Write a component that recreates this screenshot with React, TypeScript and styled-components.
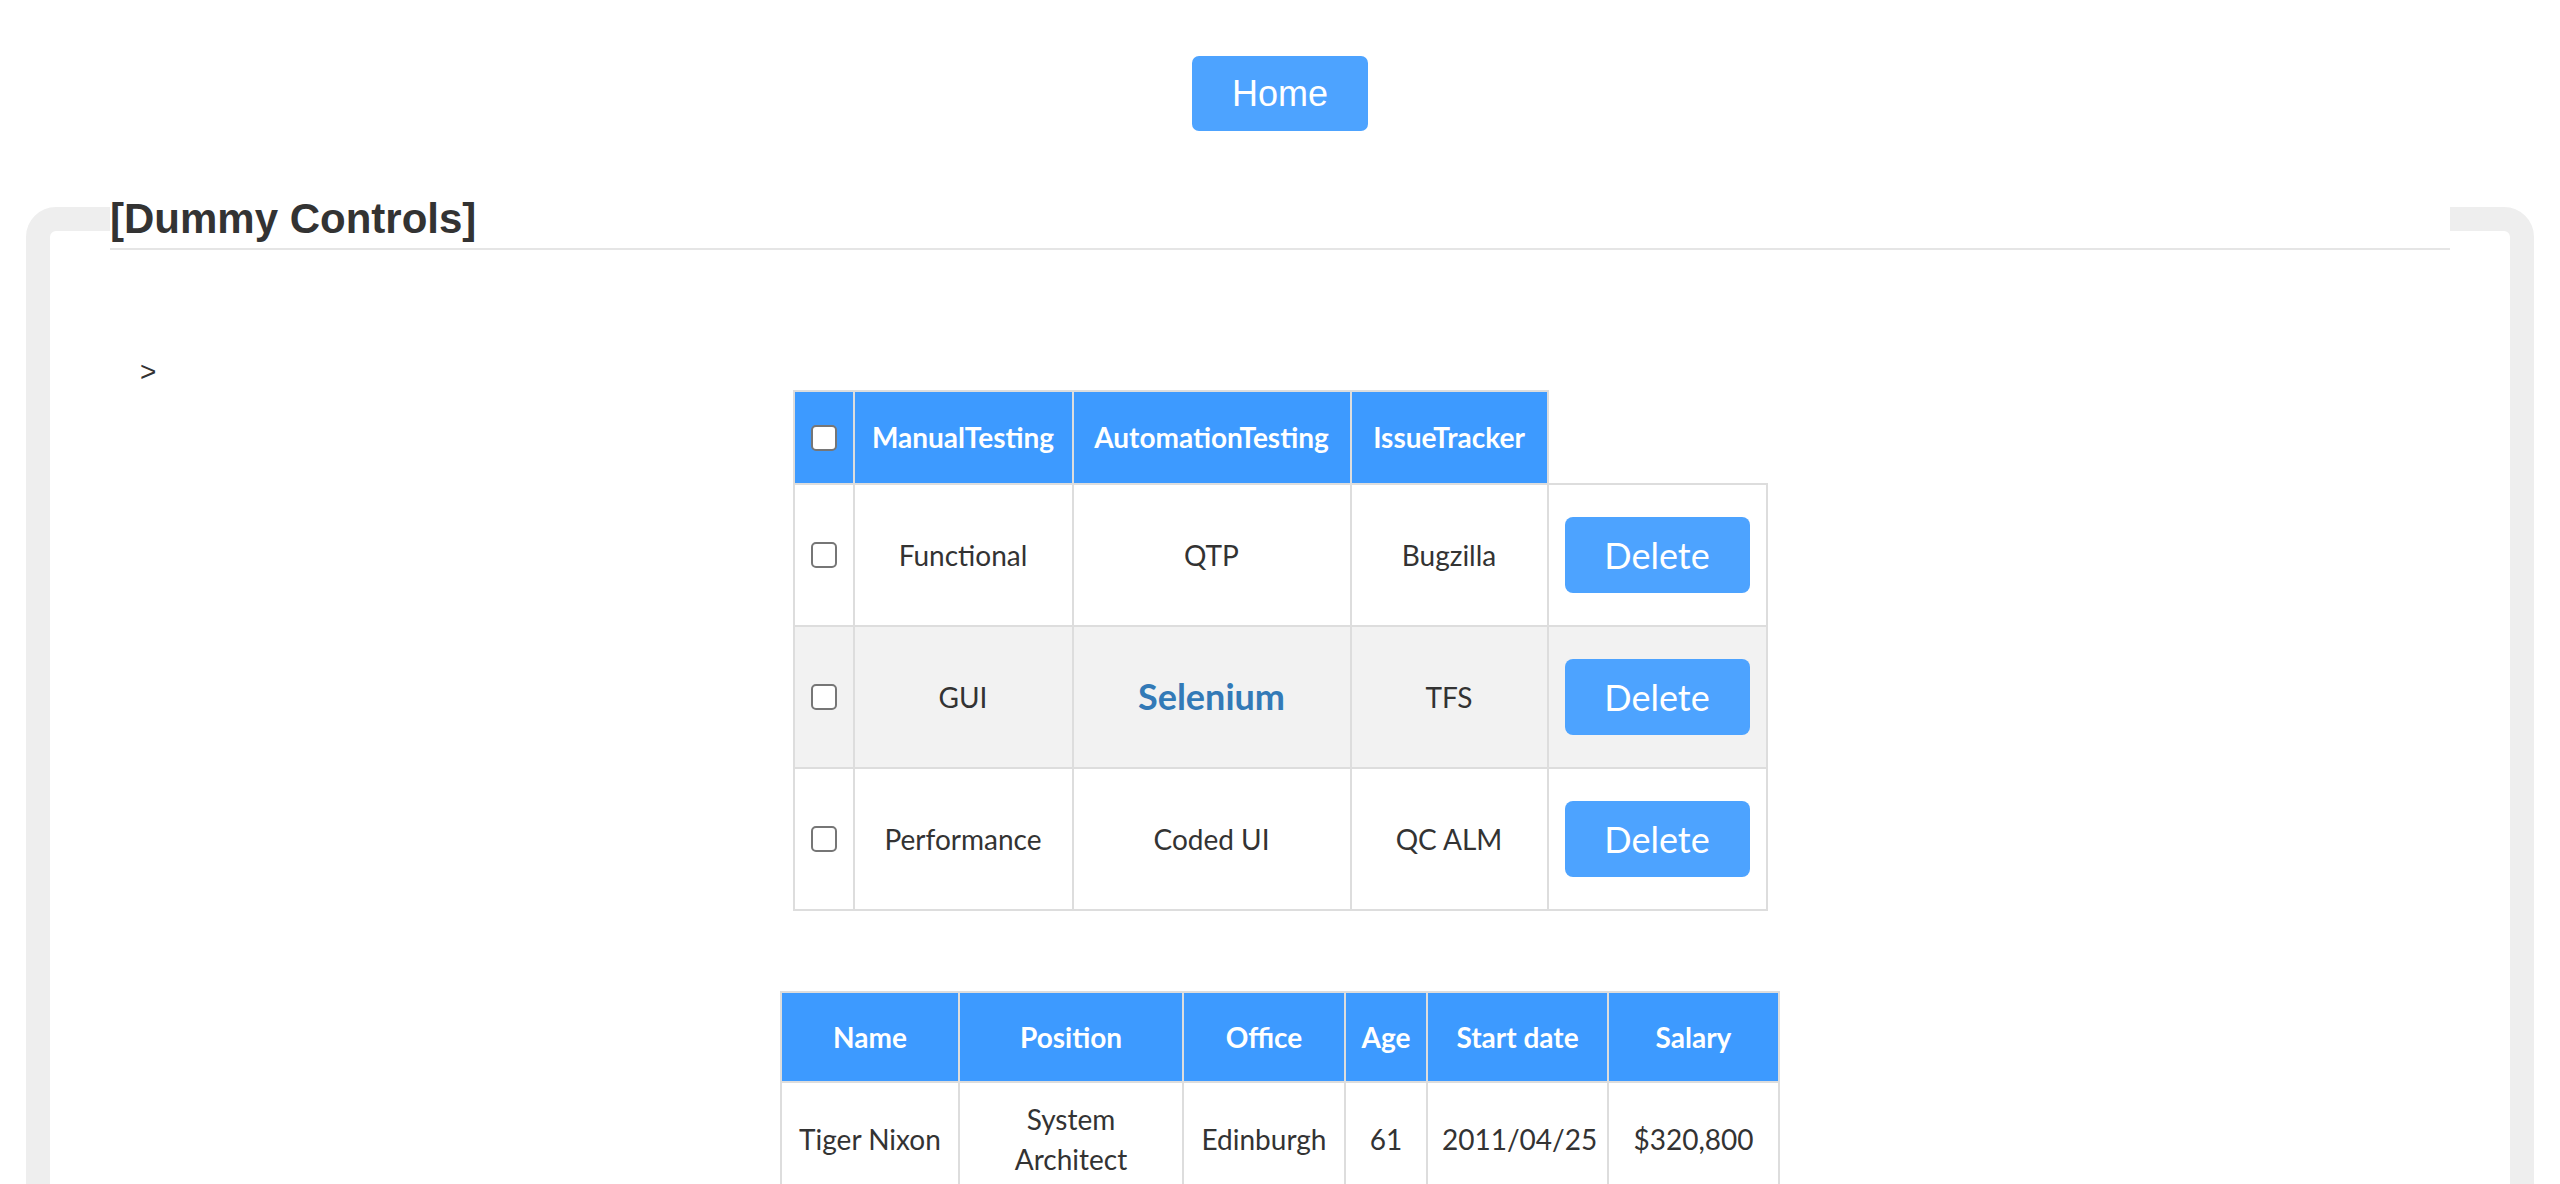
import React from "react";
import styled, { createGlobalStyle } from "styled-components";

const GlobalStyle = createGlobalStyle`
  html, body {
    margin: 0;
    padding: 0;
    background: #ffffff;
  }
  body {
    font-family: "Liberation Sans", Arial, Helvetica, sans-serif;
    font-size: 28px;
    color: #333333;
  }
  * { box-sizing: border-box; }
`;

const TopBar = styled.div`
  display: flex;
  justify-content: center;
  padding-top: 56px;
`;

const HomeButton = styled.button`
  height: 75px;
  padding: 0 40px;
  border: none;
  border-radius: 7px;
  background: #4da3ff;
  color: #ffffff;
  font-family: "Liberation Sans", Arial, Helvetica, sans-serif;
  font-size: 36px;
  line-height: 75px;
  cursor: pointer;
`;

const Panel = styled.fieldset`
  margin: 57px 26px 0;
  border: 24px solid #eeeeee;
  border-radius: 30px;
  padding: 0 60px 80px;
  min-width: 0;
`;

const PanelTitle = styled.legend`
  width: 100%;
  margin: 0;
  padding: 8px 0 6px;
  font-family: "Liberation Sans", Arial, Helvetica, sans-serif;
  font-size: 42px;
  line-height: 46px;
  font-weight: bold;
  color: #333333;
  border-bottom: 2px solid #e5e5e5;
`;

const PanelBody = styled.div`
  padding: 104px 30px 0;
`;

const Caret = styled.div`
  font-size: 28px;
  line-height: 36px;
  color: #333333;
`;

const Table = styled.table<{ $width: number; $gap?: number }>`
  width: ${(p) => p.$width}px;
  margin: ${(p) => p.$gap ?? 0}px auto 0;
  border-collapse: collapse;
  table-layout: fixed;
  font-family: Lato, "Open Sans", sans-serif;
  font-size: 28px;
  color: #333333;
`;

const Col = styled.col<{ $w: number }>`
  width: ${(p) => p.$w}px;
`;

const HeadCell = styled.th<{ $pad?: number; $tight?: boolean }>`
  background: #3d9aff;
  color: #ffffff;
  font-weight: bold;
  border: 2px solid #dddddd;
  padding: ${(p) => p.$pad ?? 25}px ${(p) => (p.$tight ? 0 : 14)}px;
  line-height: ${(p) => (p.$pad === 24 ? 40 : 41)}px;
  text-align: center;
  white-space: nowrap;
  overflow: hidden;
`;

const Row = styled.tr<{ $striped?: boolean }>`
  background: ${(p) => (p.$striped ? "#f2f2f2" : "#ffffff")};
`;

const Cell = styled.td<{ $pad?: string }>`
  border: 2px solid #dddddd;
  padding: ${(p) => p.$pad ?? "32px 14px"};
  text-align: center;
  vertical-align: middle;
  line-height: 40px;
`;

const Check = styled.input.attrs({ type: "checkbox" })`
  appearance: none;
  -webkit-appearance: none;
  display: block;
  width: 26px;
  height: 26px;
  margin: 0 auto;
  border: 2px solid #767676;
  border-radius: 5px;
  background: #ffffff;
`;

const DeleteButton = styled.button`
  display: block;
  width: 185px;
  height: 76px;
  margin: 0 auto;
  padding: 0;
  border: none;
  border-radius: 8px;
  background: #4da3ff;
  color: #ffffff;
  font-family: Lato, "Open Sans", sans-serif;
  font-size: 36px;
  line-height: 76px;
  cursor: pointer;
`;

const ToolLink = styled.a`
  color: #337ab7;
  font-weight: bold;
  font-size: 36px;
  line-height: 40px;
  text-decoration: none;
`;

const testing = [
  { manual: "Functional", auto: "QTP", tracker: "Bugzilla", link: false },
  { manual: "GUI", auto: "Selenium", tracker: "TFS", link: true },
  { manual: "Performance", auto: "Coded UI", tracker: "QC ALM", link: false },
];

const employees = [
  ["Tiger Nixon", "System Architect", "Edinburgh", "61", "2011/04/25", "$320,800"],
];

const testCols = [60, 219, 278, 197, 219];
const empCols = [178, 224, 162, 82, 181, 171];
const sum = (a: number[]) => a.reduce((s, v) => s + v, 0);

export default function App() {
  return (
    <>
      <GlobalStyle />
      <TopBar>
        <HomeButton>Home</HomeButton>
      </TopBar>
      <Panel>
        <PanelTitle>[Dummy Controls]</PanelTitle>
        <PanelBody>
          <Caret>&gt;</Caret>
          <Table $width={sum(testCols)}>
            <colgroup>
              {testCols.map((w, i) => (
                <Col key={i} $w={w} />
              ))}
            </colgroup>
            <thead>
              <tr>
                <HeadCell $tight>
                  <Check />
                </HeadCell>
                <HeadCell>ManualTesting</HeadCell>
                <HeadCell>AutomationTesting</HeadCell>
                <HeadCell>IssueTracker</HeadCell>
              </tr>
            </thead>
            <tbody>
              {testing.map((r, i) => (
                <Row key={r.manual} $striped={i === 1}>
                  <Cell $pad="32px 0">
                    <Check />
                  </Cell>
                  <Cell>{r.manual}</Cell>
                  <Cell>{r.link ? <ToolLink href="#">{r.auto}</ToolLink> : r.auto}</Cell>
                  <Cell>{r.tracker}</Cell>
                  <Cell $pad="32px 0">
                    <DeleteButton>Delete</DeleteButton>
                  </Cell>
                </Row>
              ))}
            </tbody>
          </Table>
          <Table $width={sum(empCols)} $gap={80}>
            <colgroup>
              {empCols.map((w, i) => (
                <Col key={i} $w={w} />
              ))}
            </colgroup>
            <thead>
              <tr>
                {["Name", "Position", "Office", "Age", "Start date", "Salary"].map((h) => (
                  <HeadCell key={h} $pad={24}>
                    {h}
                  </HeadCell>
                ))}
              </tr>
            </thead>
            <tbody>
              {employees.map((e) => (
                <Row key={e[0]}>
                  {e.map((v, j) => (
                    <Cell key={j} $pad="16px 14px">
                      {v}
                    </Cell>
                  ))}
                </Row>
              ))}
            </tbody>
          </Table>
        </PanelBody>
      </Panel>
    </>
  );
}
